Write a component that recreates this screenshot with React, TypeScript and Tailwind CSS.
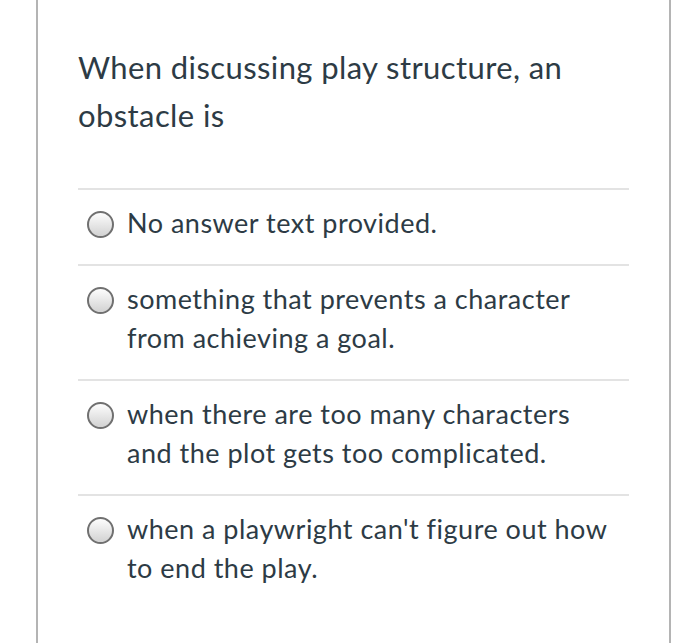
const options = [
  'No answer text provided.',
  'something that prevents a character from achieving a goal.',
  'when there are too many characters and the plot gets too complicated.',
  "when a playwright can't figure out how to end the play.",
];

function Radio() {
  return (
    <span className="mt-[8px] block h-[27px] w-[27px] flex-shrink-0 rounded-full border-2 border-[#707070] bg-gradient-to-b from-[#fdfdfd] to-[#d2d2d2]" />
  );
}

export default function App() {
  return (
    <div className="min-h-[643px] bg-white font-['Lato','Liberation_Sans',sans-serif] text-[#2d3b45]">
      <div className="ml-[36px] h-[643px] w-[635px] border-x-2 border-[#b4b4b4] px-[40px] pt-[43px]">
        <h2 className="text-[31px] font-normal leading-[48px] tracking-[0.4px]">
          When discussing play structure, an obstacle is
        </h2>

        <div className="mt-[49px] border-t-2 border-[#e3e3e3]">
          {options.map((text) => (
            <label
              key={text}
              className="flex gap-[13px] border-b-2 border-[#e3e3e3] pb-[22px] pl-[9px] pr-[14px] pt-[13px] last:border-b-0"
            >
              <Radio />
              <span className="text-[27px] leading-[39px] tracking-[0.5px]">{text}</span>
            </label>
          ))}
        </div>
      </div>
    </div>
  );
}
